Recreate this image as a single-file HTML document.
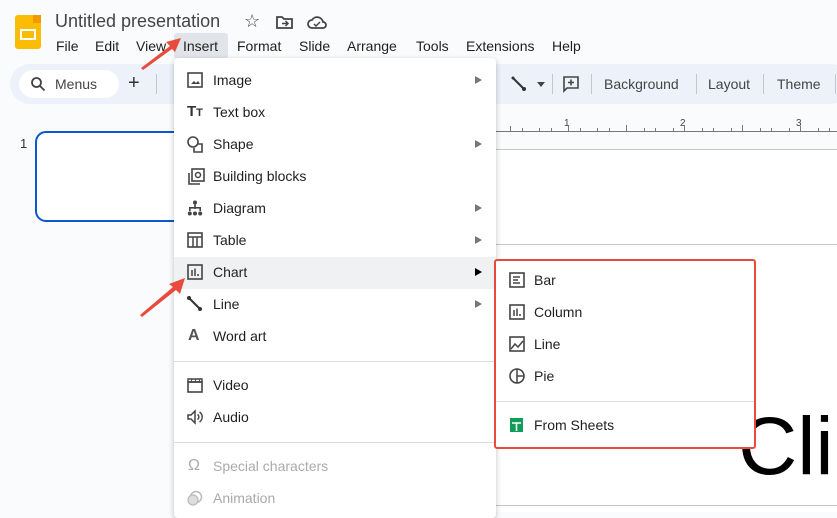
<!DOCTYPE html>
<html><head><style>
*{margin:0;padding:0;box-sizing:border-box}
body{width:837px;height:512px;overflow:hidden;background:#f9fbfd;font-family:"Liberation Sans",Arial,sans-serif;color:#1f1f1f;position:relative}
.a{position:absolute}
.mi{position:absolute;left:0;width:322px;height:32px;font-size:14px;line-height:32px;color:#1f1f1f}
.mi span{position:absolute;left:39px}
.mi svg{position:absolute;left:13px;top:8px}
.arr{position:absolute;right:14px;top:12px;width:0;height:0;border-left:7px solid #777;border-top:4px solid transparent;border-bottom:4px solid transparent}
.sep{position:absolute;left:0;width:322px;height:1px;background:#dadce0}
.si{position:absolute;left:0;width:257px;height:32px;font-size:14px;line-height:32px}
.si span{position:absolute;left:38px}
.si svg{position:absolute;left:13px;top:8px}
.tb{position:absolute;top:76px;font-size:14px;color:#444}
.dv{position:absolute;top:74px;width:1px;height:20px;background:#c7c7c7}
</style></head><body>
<div class="a" style="left:15px;top:15px;width:26px;height:34px;background:#fbbc04;border-radius:3px"></div>
<div class="a" style="left:33px;top:15px;width:8px;height:8px;background:#f29900"></div>
<div class="a" style="left:20px;top:29px;width:16px;height:11px;border:2px solid #fff"></div>
<div class="a" style="left:55px;top:11px;font-size:18px;color:#444">Untitled presentation</div>
<div class="a" style="left:244px;top:11px;font-size:18px;color:#444">☆</div>
<svg class="a" style="left:276px;top:15px" width="18" height="14"><path d="M1 2h5l2 2h8v9H1z" fill="none" stroke="#444" stroke-width="1.8"/><path d="M6 8.5h6M9.5 6l2.5 2.5-2.5 2.5" stroke="#444" fill="none" stroke-width="1.5"/></svg>
<svg class="a" style="left:307px;top:15px" width="20" height="14"><path d="M5 13a4 4 0 0 1 0-8 6 6 0 0 1 11 2 3 3 0 0 1 0 6z" fill="none" stroke="#444" stroke-width="1.8"/><path d="M7 9l2 2 4-4" stroke="#444" fill="none" stroke-width="1.5"/></svg>
<div class="a" style="left:174px;top:33px;width:54px;height:26px;background:#e1e5ea;border-radius:3px"></div>
<div class="a" style="left:56px;top:38px;font-size:14px;word-spacing:0">
<span class="a" style="left:0">File</span><span class="a" style="left:39px">Edit</span><span class="a" style="left:80px">View</span><span class="a" style="left:127px">Insert</span><span class="a" style="left:181px">Format</span><span class="a" style="left:243px">Slide</span><span class="a" style="left:291px">Arrange</span><span class="a" style="left:360px">Tools</span><span class="a" style="left:410px;white-space:nowrap">Extensions</span><span class="a" style="left:496px">Help</span></div>
<div class="a" style="left:10px;top:64px;width:840px;height:40px;background:#edf2fa;border-radius:20px"></div>
<div class="a" style="left:19px;top:70px;width:100px;height:28px;background:#fff;border-radius:14px"></div>
<svg class="a" style="left:30px;top:76px" width="16" height="16"><circle cx="6.5" cy="6.5" r="4.5" fill="none" stroke="#444" stroke-width="1.8"/><path d="M10 10l4.5 4.5" stroke="#444" stroke-width="1.8"/></svg>
<div class="a" style="left:55px;top:76px;font-size:14px;color:#444">Menus</div>
<div class="a" style="left:128px;top:72px;font-size:20px;color:#333">+</div>
<div class="dv" style="left:156px"></div>
<svg class="a" style="left:511px;top:76px" width="16" height="16"><path d="M2 2l11 11" stroke="#333" stroke-width="2"/><circle cx="13" cy="13" r="2" fill="#333"/><circle cx="2" cy="2" r="1.5" fill="#333"/></svg>
<div class="a" style="left:537px;top:82px;border-top:5px solid #444;border-left:4px solid transparent;border-right:4px solid transparent"></div>
<div class="dv" style="left:552px"></div>
<svg class="a" style="left:562px;top:75px" width="18" height="18"><path d="M2 2h14v11H5l-3 3z" fill="none" stroke="#444" stroke-width="1.6"/><path d="M9 4.5v6M6 7.5h6" stroke="#444" stroke-width="1.6"/></svg>
<div class="dv" style="left:591px"></div>
<div class="tb" style="left:604px">Background</div>
<div class="dv" style="left:696px"></div>
<div class="tb" style="left:708px">Layout</div>
<div class="dv" style="left:763px"></div>
<div class="tb" style="left:777px">Theme</div>
<div class="dv" style="left:835px"></div>
<div class="a" style="left:496px;top:131px;width:341px;height:1px;background:#777"></div>
<svg class="a" style="left:496px;top:118px" width="341" height="14">
<g stroke="#777" stroke-width="1">
<path d="M14.5 8v5M26.5 10v3M43.5 10v3M55.5 10v3M72.5 8v5M84.5 10v3M101.5 10v3M113.5 10v3M130.5 7v6M148.5 10v3M159.5 10v3M177.5 10v3M188.5 8v5M206.5 10v3M217.5 10v3M235.5 10v3M246.5 7v6M264.5 10v3M275.5 10v3M293.5 10v3M304.5 8v5M322.5 10v3M333.5 10v3"/></g>
<g font-size="10" fill="#444" font-family="Liberation Sans"><text x="68" y="8">1</text><text x="184" y="8">2</text><text x="300" y="8">3</text></g></svg>
<div class="a" style="left:496px;top:149px;width:341px;height:363px;background:#fff;border-top:1px solid #c7c7c7"></div>
<div class="a" style="left:496px;top:244px;width:341px;height:1px;background:#c7c7c7"></div>
<div class="a" style="left:496px;top:505px;width:341px;height:1px;background:#c7c7c7"></div>
<div class="a" style="left:738px;top:406px;font-size:82px;color:#000;line-height:1">Cli</div>
<div class="a" style="left:20px;top:136px;font-size:13px;color:#333">1</div>
<div class="a" style="left:35px;top:131px;width:160px;height:91px;border:2px solid #0b57d0;border-radius:11px;background:#fff"></div>
<div class="a" style="left:174px;top:58px;width:322px;height:460px;background:#fff;box-shadow:0 2px 6px rgba(0,0,0,.25);border-radius:4px">
<div class="a" style="left:0;top:199px;width:322px;height:32px;background:#f0f1f3"></div>
<div class="mi" style="top:6px"><svg width="16" height="16"><rect x="1" y="1" width="14" height="14" fill="none" stroke="#444" stroke-width="1.6"/><path d="M4 12l3-3 2 2 2-2 2 3z" fill="#444"/></svg><span>Image</span><i class="arr"></i></div>
<div class="mi" style="top:38px"><span style="left:13px;font-weight:bold;font-size:15px;color:#333">T<small style="font-size:11px">T</small></span><span>Text box</span></div>
<div class="mi" style="top:70px"><svg width="16" height="18"><circle cx="6" cy="6" r="5" fill="none" stroke="#444" stroke-width="1.6"/><path d="M11 8h4v8H7v-4" fill="none" stroke="#444" stroke-width="1.6"/></svg><span>Shape</span><i class="arr"></i></div>
<div class="mi" style="top:102px"><svg width="18" height="18"><rect x="5" y="1" width="12" height="12" fill="none" stroke="#444" stroke-width="1.6"/><circle cx="11" cy="7" r="2.5" fill="none" stroke="#444" stroke-width="1.5"/><path d="M2 5v11h11" fill="none" stroke="#444" stroke-width="1.6"/></svg><span>Building blocks</span></div>
<div class="mi" style="top:134px"><svg width="16" height="16" fill="#444"><circle cx="8" cy="2.5" r="2"/><rect x="7.2" y="4" width="1.6" height="5"/><rect x="2" y="7" width="12" height="1.6"/><rect x="2" y="7" width="1.6" height="4"/><rect x="12.4" y="7" width="1.6" height="4"/><circle cx="2.8" cy="13.5" r="2"/><circle cx="8" cy="13.5" r="2"/><circle cx="13.2" cy="13.5" r="2"/></svg><span>Diagram</span><i class="arr"></i></div>
<div class="mi" style="top:166px"><svg width="16" height="16"><rect x="1" y="1" width="14" height="14" fill="none" stroke="#444" stroke-width="1.6"/><path d="M1 5h14M6 5v10M10 5v10" stroke="#444" stroke-width="1.5"/></svg><span>Table</span><i class="arr"></i></div>
<div class="mi" style="top:198px"><svg width="16" height="16"><rect x="1" y="1" width="14" height="14" fill="none" stroke="#444" stroke-width="1.6"/><path d="M5 12V6M8 12V4.5M11 12v-2" stroke="#444" stroke-width="1.5"/></svg><span>Chart</span><i class="arr" style="border-left-color:#000"></i></div>
<div class="mi" style="top:230px"><svg width="16" height="16"><path d="M2 2l11 11" stroke="#333" stroke-width="2"/><circle cx="13" cy="13" r="2" fill="#333"/><circle cx="2" cy="2" r="2" fill="#333"/></svg><span>Line</span><i class="arr"></i></div>
<div class="mi" style="top:262px"><span style="left:14px;font-weight:bold;font-size:16px;color:#555">A</span><span>Word art</span></div>
<div class="sep" style="top:303px"></div>
<div class="mi" style="top:311px"><svg width="16" height="16"><rect x="1" y="5" width="14" height="10" fill="none" stroke="#444" stroke-width="1.6"/><path d="M1 2h14v3H1z" fill="none" stroke="#444" stroke-width="1.4"/><path d="M5 2l-1 3M9 2l-1 3M13 2l-1 3" stroke="#444"/></svg><span>Video</span></div>
<div class="mi" style="top:343px"><svg width="16" height="16"><path d="M1 6h3l4-4v12l-4-4H1z" fill="none" stroke="#444" stroke-width="1.5"/><path d="M10.5 5.5a3 3 0 0 1 0 5M12.5 3a6 6 0 0 1 0 10" fill="none" stroke="#444" stroke-width="1.4"/></svg><span>Audio</span></div>
<div class="sep" style="top:384px"></div>
<div class="mi" style="top:392px;color:#aaa"><span style="left:14px;font-size:16px">Ω</span><span>Special characters</span></div>
<div class="mi" style="top:424px;color:#aaa"><svg width="16" height="16"><circle cx="9" cy="7" r="5.5" fill="none" stroke="#bbb" stroke-width="1.5"/><circle cx="6" cy="10" r="5" fill="#ddd" stroke="#bbb" stroke-width="1.2"/></svg><span>Animation</span></div>
</div>
<div class="a" style="left:494px;top:259px;width:262px;height:190px;background:#fff;border:2px solid #e84b3c;border-radius:3px">
<div class="si" style="top:3px"><svg width="16" height="16"><rect x="1" y="1" width="14" height="14" fill="none" stroke="#444" stroke-width="1.6"/><path d="M4 5h7M4 8h5M4 11h7" stroke="#444" stroke-width="1.5"/></svg><span>Bar</span></div>
<div class="si" style="top:35px"><svg width="16" height="16"><rect x="1" y="1" width="14" height="14" fill="none" stroke="#444" stroke-width="1.6"/><path d="M5 12V6M8 12V4.5M11 12v-2" stroke="#444" stroke-width="1.5"/></svg><span>Column</span></div>
<div class="si" style="top:67px"><svg width="16" height="16"><rect x="1" y="1" width="14" height="14" fill="none" stroke="#444" stroke-width="1.6"/><path d="M2 13l4-5 3 3 5-6" fill="none" stroke="#444" stroke-width="1.5"/></svg><span>Line</span></div>
<div class="si" style="top:99px"><svg width="16" height="16"><circle cx="8" cy="8" r="7" fill="none" stroke="#444" stroke-width="1.6"/><path d="M8 1v14M8 8h7" stroke="#444" stroke-width="1.5"/></svg><span>Pie</span></div>
<div class="a" style="left:0;top:140px;width:258px;height:1px;background:#dadce0"></div>
<div class="si" style="top:148px"><svg width="16" height="16"><rect x="1" y="1" width="13" height="14" fill="#0f9d58"/><path d="M3 6h9M7.5 6v8" stroke="#fff" stroke-width="1.6"/></svg><span>From Sheets</span></div>
</div>
<svg class="a" style="left:0;top:0" width="837" height="512"><path d="M141 68L170 46 166 42 181 38 175 52 172 49 143 70z" fill="#e84b3c"/><path d="M140 315L173 287 169 284 185 278 180 294 176 290 142 317z" fill="#e84b3c"/></svg>
</body></html>
